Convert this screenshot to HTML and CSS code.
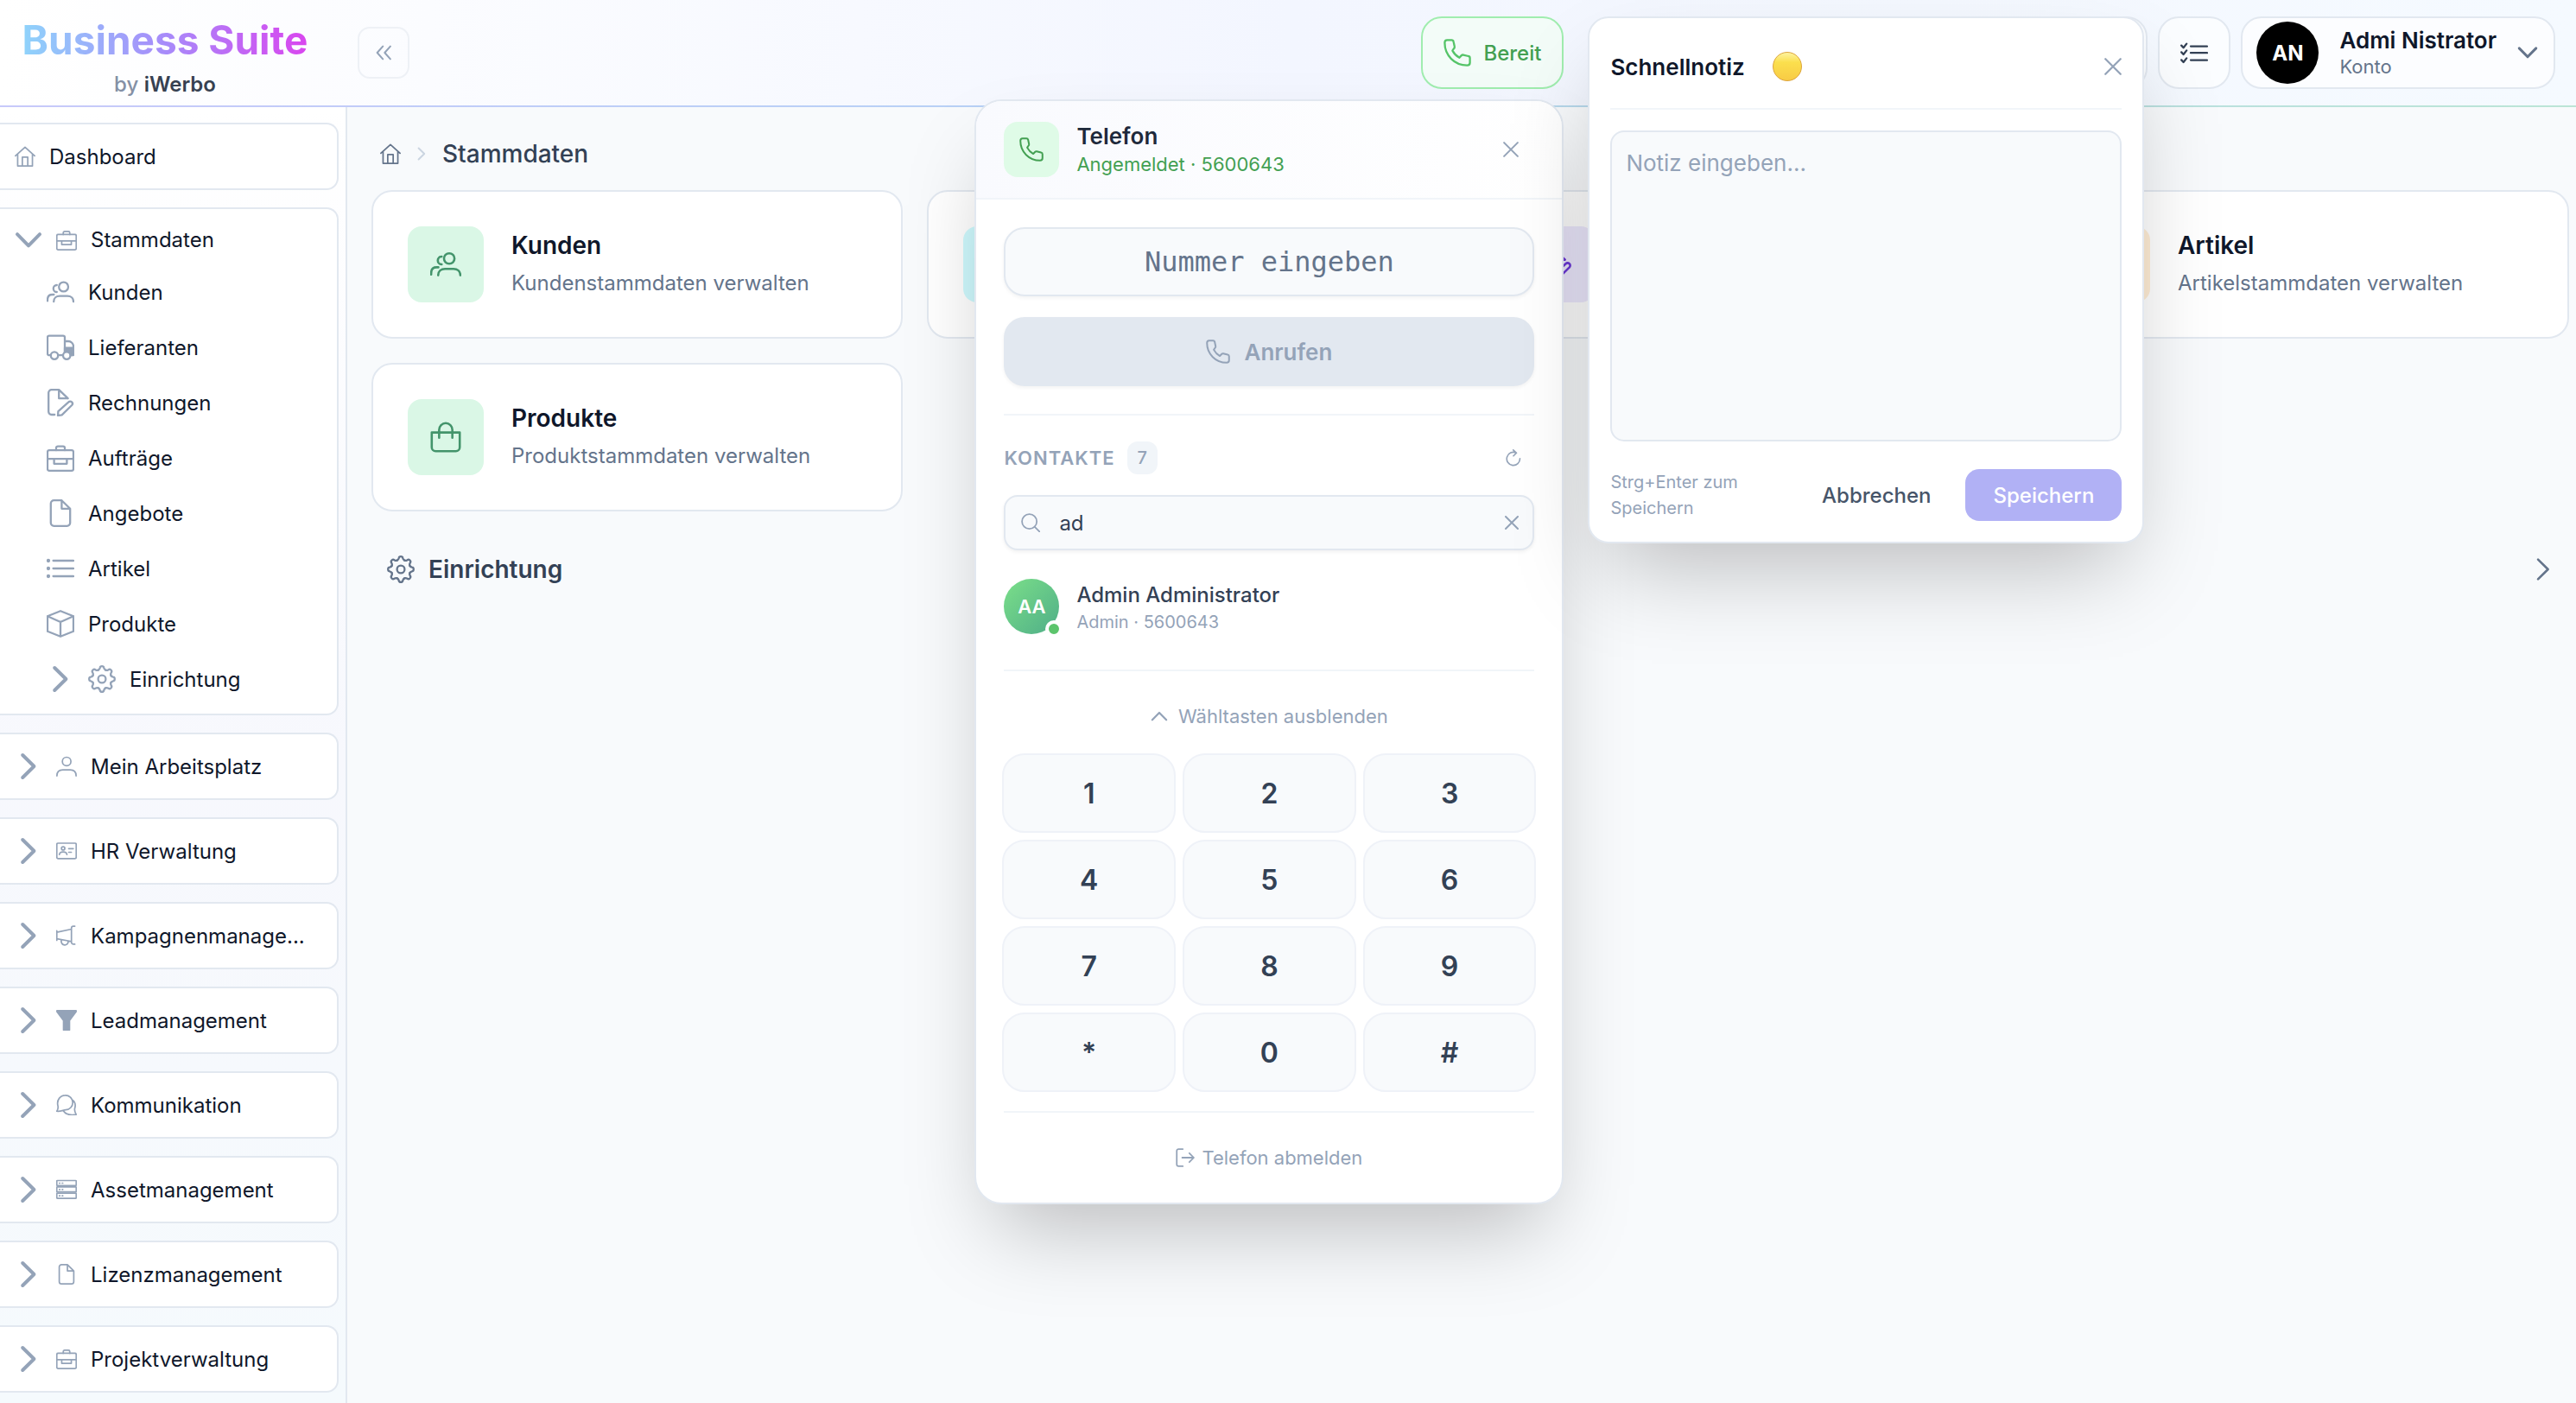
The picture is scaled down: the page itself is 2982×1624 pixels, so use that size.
FILE: index.html
```html
<!DOCTYPE html>
<html lang="de">
<head>
    <meta charset="UTF-8">
    <meta name="viewport" content="width=device-width, initial-scale=1.0">
    <title>Business Suite</title>
    <link rel="stylesheet" href="styles.css">
</head>
<body>
    <!-- Icons -->
    <svg class="sprite" aria-hidden="true">
        <symbol id="i-home" viewBox="0 0 16 16"><path d="M.6 7.6 8 .9l7.4 6.7M2.3 6.2v9.2h11.4V6.2M5.9 15.2V8.6h4.2v6.6"/></symbol>
        <symbol id="i-case" viewBox="0 0 16 16"><rect x=".5" y="3.6" width="15" height="11.8" rx="1"/><path d="M5.5 3.6V2.3a1 1 0 0 1 1-1h3a1 1 0 0 1 1 1v1.3M.5 8.6h15M4.3 8.6v2.8h7.4V8.6"/></symbol>
        <symbol id="i-people" viewBox="0 0 16 16"><circle cx="9.8" cy="5" r="2.7"/><path d="M4.1 13.6c0-2 1.5-3.3 3.5-3.3H12c2 0 3.5 1.3 3.5 3.3M5.9 4a2 2 0 0 0 0 4M.5 13.2v-.7c0-1.8 1-3 2.8-3h.9"/></symbol>
        <symbol id="i-truck" viewBox="0 0 16 16"><path d="M2.5 12.6h-1a1 1 0 0 1-1-1V2.3a1 1 0 0 1 1-1h8a1 1 0 0 1 1 1v10.3h-4M10.5 4.5h2a3 3 0 0 1 3 3v4.1a1 1 0 0 1-1 1h-1"/><path class="solid" d="M10.5 8.3h5v4.2h-1.8l-2-1.9-1.2 1.5z"/><circle cx="4.5" cy="12.8" r="2.1"/><circle cx="11.6" cy="12.8" r="2.1" fill="#fff"/></symbol>
        <symbol id="i-invoice" viewBox="0 0 16 16"><path d="M4.6 15H2.8a1.7 1.7 0 0 1-1.7-1.7v-11A1.7 1.7 0 0 1 2.8.6h4.3l5.2 5M7.1.6v5h5.2M6.5 15.5l.2-2.4 6-5.4a1.3 1.3 0 0 1 1.9 1.8l-5.8 5.7z"/></symbol>
        <symbol id="i-file" viewBox="0 0 16 16"><path d="M8.7.6H4.2a1.8 1.8 0 0 0-1.8 1.8v11.2a1.8 1.8 0 0 0 1.8 1.8h7.6a1.8 1.8 0 0 0 1.8-1.8V5.4zM8.7.6v4.8h4.9"/></symbol>
        <symbol id="i-list" viewBox="0 0 16 16"><path d="M3.8 3.5h11.7M3.8 8h11.7M3.8 12.5h11.7"/><g class="solid"><circle cx="1" cy="3.5" r=".5"/><circle cx="1" cy="8" r=".5"/><circle cx="1" cy="12.5" r=".5"/></g></symbol>
        <symbol id="i-box" viewBox="0 0 16 16"><path d="M8 .6l7.5 3v8.8L8 15.4l-7.5-3V3.6zM.5 3.6 8 7l7.5-3.4M8 7v8.4"/></symbol>
        <symbol id="i-gear" viewBox="0 0 16 16"><path id="tooth" d="M5.86 2.83C6.5 2.57 6.7 2.2 6.85 1.5 7 .3 9 .3 9.15 1.5c.15.7.35 1.07.99 1.33"/><use href="#tooth" transform="rotate(45 8 8)"/><use href="#tooth" transform="rotate(90 8 8)"/><use href="#tooth" transform="rotate(135 8 8)"/><use href="#tooth" transform="rotate(180 8 8)"/><use href="#tooth" transform="rotate(225 8 8)"/><use href="#tooth" transform="rotate(270 8 8)"/><use href="#tooth" transform="rotate(315 8 8)"/><circle cx="8" cy="8" r="2.2"/></symbol>
        <symbol id="i-user" viewBox="0 0 16 16"><circle cx="8.1" cy="4.3" r="3.3"/><path d="M.6 15.4c0-2.9 1.8-4.6 4.5-4.6h5.8c2.7 0 4.5 1.7 4.5 4.6"/></symbol>
        <symbol id="i-id" viewBox="0 0 16 16"><rect x=".5" y="2" width="15" height="11.9" rx="1"/><circle cx="5.4" cy="6" r="1.3"/><path d="M2.5 10.8c.2-2.8 5.6-2.8 5.8 0M9.7 6.2h3.5M9.7 9h2"/></symbol>
        <symbol id="i-horn" viewBox="0 0 16 16"><path d="M.5 4.2v7.4M.5 5.4 11.8 3M.5 10.4l11.3 2.1M14.4.7h-1.1a1.5 1.5 0 0 0-1.5 1.5v10.9a1.5 1.5 0 0 0 1.5 1.5h1.1M3.9 11.6c-.2 4.6 5.4 4.7 5.4.9"/></symbol>
        <symbol id="i-funnel" viewBox="0 0 16 16"><path class="solid" d="M.6.6h14.8v.8l-5.1 6.8v7.3H5.7V8.2L.6 1.4z"/></symbol>
        <symbol id="i-chat" viewBox="0 0 16 16"><path d="M.5 12.8c1.2-1.6 1.2-2.8.8-4.4C.3 4.2 3.2.6 7 .6a5.6 5.6 0 0 1 .4 11.2c-1.9.1-3.9 1.4-6.9 1zM12.7 4.3c1.9 1.4 2.4 3.8 1.7 6.2-.4 1.6.1 3.3 1.1 4.9-3.8.6-8 .2-9.8-2.7"/></symbol>
        <symbol id="i-server" viewBox="0 0 16 16"><rect x=".5" y="1" width="15" height="3.9" rx=".5"/><rect x=".5" y="5.9" width="15" height="3.9" rx=".5"/><rect x=".5" y="10.8" width="15" height="3.9" rx=".5"/><path d="M2.5 3h.4M4.7 3h.4M2.5 7.9h.4M4.7 7.9h.4M2.5 12.8h.4M4.7 12.8h.4"/></symbol>
        <symbol id="i-bag" viewBox="0 0 16 16"><path d="M.8 5.6h14.4v7.6a2 2 0 0 1-2 2H2.8a2 2 0 0 1-2-2zM4.6 8.3V4.2a3.4 3.4 0 0 1 6.8 0v4.1"/></symbol>
        <symbol id="i-phone" viewBox="0 0 16 16"><path d="M2.1.7h2.6c.6 0 1 .3 1.1.9l.6 2.8c.1.5 0 .9-.4 1.2l-.8 1.2c.9 1.7 2.2 3.1 4 4.1l1.1-1.2c.3-.3.8-.5 1.2-.4l2.9.7c.6.1.9.6.9 1.1v2.6c0 1-.7 1.600-1.600 1.600C6.400 15.300.7 9.600.7 2.300c0-.9.5-1.600 1.400-1.600z"/></symbol>
        <symbol id="i-x" viewBox="0 0 16 16"><path d="M1 1l14 14M15 1 1 15"/></symbol>
        <symbol id="i-search" viewBox="0 0 16 16"><circle cx="7" cy="7" r="6.2"/><path d="M11.5 11.5l4 4"/></symbol>
        <symbol id="i-refresh" viewBox="0 0 16 16"><path d="M14 8.6a6.1 6.1 0 1 1-3.5-5.3M7.8.7l3 2.7L8 6.2"/></symbol>
        <symbol id="i-logout" viewBox="0 0 16 16"><path d="M6 .8H2.4A1.5 1.5 0 0 0 .9 2.3v11.4a1.5 1.5 0 0 0 1.5 1.5H6M5.5 8h9.7M11.5 4.2 15.2 8l-3.7 3.8"/></symbol>
        <symbol id="i-right" viewBox="0 0 16 16"><path d="M4.6 1.5 11.2 8l-6.6 6.5"/></symbol>
        <symbol id="i-down" viewBox="0 0 16 16"><path d="M1.5 4.6 8 11.2l6.5-6.6"/></symbol>
        <symbol id="i-up" viewBox="0 0 16 16"><path d="M1.5 11.4 8 4.8l6.5 6.6"/></symbol>
        <symbol id="i-double" viewBox="0 0 16 16"><path d="M7.3 1.5 1.5 8l5.8 6.5M15 1.5 9.2 8l5.8 6.5"/></symbol>
        <symbol id="i-tasks" viewBox="0 0 16 16"><path d="M.6 3.8l1.2 1.3 1.8-2.3M.6 7.7l1.2 1.3 1.8-2.3M.6 12.2l1.2 1.3 1.8-2.3M6 4.3h9.5M6 8.1h9.5M6 12.3h9.5"/></symbol>
    </svg>

    <header class="topbar">
        <a class="brand" href="#">
            <span class="brand-name">Business Suite</span>
            <span class="brand-by">by <b>iWerbo</b></span>
        </a>
        <button class="collapse-btn" type="button"><svg class="icon icon-18"><use href="#i-double"/></svg></button>

        <div class="topbar-right">
            <div class="phone">
                <button class="phone-btn" type="button"><svg class="icon icon-32"><use href="#i-phone"/></svg>Bereit</button>

                <!-- Telefon -->
                <section class="phone-panel">
                    <div class="phone-head">
                        <span class="phone-badge"><svg class="icon icon-28"><use href="#i-phone"/></svg></span>
                        <div class="phone-title">
                            <h2>Telefon</h2>
                            <p>Angemeldet · 5600643</p>
                        </div>
                        <button class="close-btn" type="button"><svg class="icon icon-18"><use href="#i-x"/></svg></button>
                    </div>
                    <div class="phone-body">
                        <input class="number-input" type="tel" placeholder="Nummer eingeben">
                        <button class="call-btn" type="button" disabled><svg class="icon icon-28"><use href="#i-phone"/></svg>Anrufen</button>

                        <div class="contacts">
                            <div class="contacts-head">
                                <label for="contactSearch">KONTAKTE</label>
                                <span class="count">7</span>
                                <button class="refresh-btn" type="button"><svg class="icon icon-20"><use href="#i-refresh"/></svg></button>
                            </div>
                            <div class="search">
                                <svg class="icon icon-22"><use href="#i-search"/></svg>
                                <input id="contactSearch" type="text" value="ad">
                                <button type="button"><svg class="icon icon-16"><use href="#i-x"/></svg></button>
                            </div>
                            <a class="contact" href="#">
                                <span class="contact-avatar">AA<i class="online"></i></span>
                                <span class="contact-text">
                                    <span class="contact-name">Admin Administrator</span>
                                    <span class="contact-info">Admin · 5600643</span>
                                </span>
                            </a>
                        </div>

                        <div class="dialpad">
                            <button class="dialpad-toggle" type="button"><svg class="icon icon-20"><use href="#i-up"/></svg>Wähltasten ausblenden</button>
                            <div class="keys">
                                <button type="button">1</button>
                                <button type="button">2</button>
                                <button type="button">3</button>
                                <button type="button">4</button>
                                <button type="button">5</button>
                                <button type="button">6</button>
                                <button type="button">7</button>
                                <button type="button">8</button>
                                <button type="button">9</button>
                                <button type="button">*</button>
                                <button type="button">0</button>
                                <button type="button">#</button>
                            </div>
                        </div>
                        <div class="phone-foot">
                            <button type="button"><svg class="icon icon-22"><use href="#i-logout"/></svg>Telefon abmelden</button>
                        </div>
                    </div>
                </section>
            </div>

            <div class="notes">
                <button class="square-btn" type="button"><svg class="icon icon-32"><use href="#i-invoice"/></svg></button>

                <!-- Schnellnotiz -->
                <section class="note-panel">
                    <div class="note-head">
                        <label for="note">Schnellnotiz</label>
                        <i class="note-color"></i>
                        <button class="close-btn" type="button"><svg class="icon icon-20"><use href="#i-x"/></svg></button>
                    </div>
                    <textarea id="note" placeholder="Notiz eingeben..."></textarea>
                    <div class="note-foot">
                        <small>Strg+Enter zum Speichern</small>
                        <button class="cancel-btn" type="button">Abbrechen</button>
                        <button class="save-btn" type="button">Speichern</button>
                    </div>
                </section>
            </div>

            <button class="square-btn" type="button"><svg class="icon icon-32"><use href="#i-tasks"/></svg></button>
            <button class="account" type="button">
                <span class="account-avatar">AN</span>
                <span class="account-text">
                    <span class="account-name">Admi Nistrator</span>
                    <span class="account-sub">Konto</span>
                </span>
                <svg class="icon icon-24"><use href="#i-down"/></svg>
            </button>
        </div>
    </header>

    <div class="layout">
        <nav class="sidebar">
            <div class="nav-group">
                <a class="nav-head" href="#"><svg class="icon icon-24"><use href="#i-home"/></svg><span>Dashboard</span></a>
            </div>
            <div class="nav-group open">
                <a class="nav-head" href="#"><svg class="icon arrow"><use href="#i-down"/></svg><svg class="icon icon-24"><use href="#i-case"/></svg><span>Stammdaten</span></a>
                <ul class="nav-sub">
                    <li><a href="#"><svg class="icon icon-32"><use href="#i-people"/></svg>Kunden</a></li>
                    <li><a href="#"><svg class="icon icon-32"><use href="#i-truck"/></svg>Lieferanten</a></li>
                    <li><a href="#"><svg class="icon icon-32"><use href="#i-invoice"/></svg>Rechnungen</a></li>
                    <li><a href="#"><svg class="icon icon-32"><use href="#i-case"/></svg>Aufträge</a></li>
                    <li><a href="#"><svg class="icon icon-32"><use href="#i-file"/></svg>Angebote</a></li>
                    <li><a href="#"><svg class="icon icon-32"><use href="#i-list"/></svg>Artikel</a></li>
                    <li><a href="#"><svg class="icon icon-32"><use href="#i-box"/></svg>Produkte</a></li>
                    <li><a href="#"><svg class="icon arrow"><use href="#i-right"/></svg><svg class="icon icon-32"><use href="#i-gear"/></svg>Einrichtung</a></li>
                </ul>
            </div>
            <div class="nav-group">
                <a class="nav-head" href="#"><svg class="icon arrow"><use href="#i-right"/></svg><svg class="icon icon-24"><use href="#i-user"/></svg><span>Mein Arbeitsplatz</span></a>
            </div>
            <div class="nav-group">
                <a class="nav-head" href="#"><svg class="icon arrow"><use href="#i-right"/></svg><svg class="icon icon-24"><use href="#i-id"/></svg><span>HR Verwaltung</span></a>
            </div>
            <div class="nav-group">
                <a class="nav-head" href="#"><svg class="icon arrow"><use href="#i-right"/></svg><svg class="icon icon-24"><use href="#i-horn"/></svg><span>Kampagnenmanage...</span></a>
            </div>
            <div class="nav-group">
                <a class="nav-head" href="#"><svg class="icon arrow"><use href="#i-right"/></svg><svg class="icon icon-24"><use href="#i-funnel"/></svg><span>Leadmanagement</span></a>
            </div>
            <div class="nav-group">
                <a class="nav-head" href="#"><svg class="icon arrow"><use href="#i-right"/></svg><svg class="icon icon-24"><use href="#i-chat"/></svg><span>Kommunikation</span></a>
            </div>
            <div class="nav-group">
                <a class="nav-head" href="#"><svg class="icon arrow"><use href="#i-right"/></svg><svg class="icon icon-24"><use href="#i-server"/></svg><span>Assetmanagement</span></a>
            </div>
            <div class="nav-group">
                <a class="nav-head" href="#"><svg class="icon arrow"><use href="#i-right"/></svg><svg class="icon icon-24"><use href="#i-file"/></svg><span>Lizenzmanagement</span></a>
            </div>
            <div class="nav-group">
                <a class="nav-head" href="#"><svg class="icon arrow"><use href="#i-right"/></svg><svg class="icon icon-24"><use href="#i-case"/></svg><span>Projektverwaltung</span></a>
            </div>
        </nav>

        <main class="content">
            <div class="breadcrumb">
                <a href="#"><svg class="icon icon-24"><use href="#i-home"/></svg></a>
                <svg class="icon icon-16 sep"><use href="#i-right"/></svg>
                <span>Stammdaten</span>
            </div>

            <div class="cards">
                <a class="card" href="#">
                    <span class="card-icon green"><svg class="icon icon-36"><use href="#i-people"/></svg></span>
                    <span class="card-text">
                        <span class="card-title">Kunden</span>
                        <span class="card-sub">Kundenstammdaten verwalten</span>
                    </span>
                </a>
                <a class="card" href="#">
                    <span class="card-icon cyan"><svg class="icon icon-36"><use href="#i-truck"/></svg></span>
                </a>
                <a class="card" href="#">
                    <span class="card-icon violet"><svg class="icon icon-36"><use href="#i-invoice"/></svg></span>
                </a>
                <a class="card" href="#">
                    <span class="card-icon orange"><svg class="icon icon-36"><use href="#i-list"/></svg></span>
                    <span class="card-text">
                        <span class="card-title">Artikel</span>
                        <span class="card-sub">Artikelstammdaten verwalten</span>
                    </span>
                </a>
                <a class="card" href="#">
                    <span class="card-icon green"><svg class="icon icon-36"><use href="#i-bag"/></svg></span>
                    <span class="card-text">
                        <span class="card-title">Produkte</span>
                        <span class="card-sub">Produktstammdaten verwalten</span>
                    </span>
                </a>
            </div>

            <button class="section-toggle" type="button">
                <svg class="icon icon-32"><use href="#i-gear"/></svg>
                <span>Einrichtung</span>
                <svg class="icon icon-28"><use href="#i-right"/></svg>
            </button>
        </main>
    </div>
</body>
</html>
```
FILE: styles.css
```css
* {
    box-sizing: border-box;
}

body {
    margin: 0;
    min-height: 100vh;
    display: flex;
    flex-direction: column;
    font-family: Inter, sans-serif;
    font-size: 24px;
    color: #0f172a;
    background-color: #f8fafc;
    overflow-x: hidden;
}

a {
    color: inherit;
    text-decoration: none;
}

h2, p, ul {
    margin: 0;
    padding: 0;
}

button, input, textarea {
    font-family: inherit;
    font-size: inherit;
    color: inherit;
    outline: none;
}

button {
    padding: 0;
    border: none;
    background: none;
    cursor: pointer;
}

/* Icons */
.sprite {
    position: absolute;
    width: 0;
    height: 0;
}

.icon {
    flex: none;
    display: block;
    fill: none;
    stroke: currentColor;
    stroke-width: 1.15;
    stroke-linecap: round;
    stroke-linejoin: round;
    overflow: visible;
}

.solid {
    fill: currentColor;
}

.icon-16 { width: 16px; height: 16px; stroke-width: 2; }
.icon-18 { width: 18px; height: 18px; stroke-width: 1.8; }
.icon-20 { width: 20px; height: 20px; stroke-width: 1.8; }
.icon-22 { width: 22px; height: 22px; stroke-width: 1.3; }
.icon-24 { width: 24px; height: 24px; }
.icon-28 { width: 28px; height: 28px; }
.icon-32 { width: 32px; height: 32px; }
.icon-36 { width: 36px; height: 36px; }

/* Header */
.topbar {
    position: relative;
    z-index: 10;
    flex: none;
    display: flex;
    align-items: center;
    height: 124px;
    padding-right: 24px;
    border-bottom: 2px solid;
    border-image: linear-gradient(90deg, #c7c9fa, #b5d2f5 45%, #b9dfe0 80%, #bbe5d6) 1;
    background: linear-gradient(90deg, #ffffff, #f3f6ff 50%, #f5faff);
}

.brand {
    width: 382px;
    padding-top: 14px;
    display: flex;
    flex-direction: column;
    align-items: center;
}

.brand-name {
    font-size: 46px;
    line-height: 56px;
    font-weight: 700;
    background: linear-gradient(90deg, #8fd3fb, #a78bfa 50%, #d946ef);
    -webkit-background-clip: text;
    background-clip: text;
    color: transparent;
}

.brand-by {
    margin-top: 4px;
    line-height: 40px;
    color: #8490a5;
    font-weight: 500;
}

.brand-by b {
    color: #374151;
    font-weight: 600;
}

.collapse-btn {
    width: 60px;
    height: 60px;
    margin-left: 32px;
    display: flex;
    align-items: center;
    justify-content: center;
    border: 2px solid #eef1f6;
    border-radius: 14px;
    color: #94a3b8;
}

.topbar-right {
    margin-left: auto;
    display: flex;
    gap: 12px;
}

.phone, .notes {
    position: relative;
}

.notes {
    z-index: 2;
    width: 664px;
    display: flex;
    justify-content: flex-end;
}

.phone-btn {
    height: 84px;
    padding: 0 24px;
    display: flex;
    align-items: center;
    gap: 14px;
    border: 2px solid #a0edaf;
    border-radius: 24px;
    background-color: #f3fcf8;
    color: #43a052;
    font-weight: 500;
}

.phone-btn .icon {
    color: #55c468;
}

.square-btn {
    width: 84px;
    height: 84px;
    display: flex;
    align-items: center;
    justify-content: center;
    border: 2px solid #e2e8f0;
    border-radius: 24px;
    background-color: #fbfdff;
    color: #334155;
}

.account {
    height: 84px;
    padding: 0 18px 0 16px;
    display: flex;
    align-items: center;
    gap: 24px;
    border: 2px solid #e2e8f0;
    border-radius: 24px;
    background-color: #fcfdff;
    text-align: left;
}

.account-avatar {
    width: 72px;
    height: 72px;
    display: flex;
    align-items: center;
    justify-content: center;
    border-radius: 50%;
    background-color: #000;
    color: #fff;
    font-weight: 700;
}

.account-text {
    display: flex;
    flex-direction: column;
}

.account-name {
    font-size: 26px;
    line-height: 32px;
    font-weight: 600;
}

.account-sub {
    font-size: 22px;
    line-height: 28px;
    color: #64748b;
}

.account .icon {
    color: #64748b;
    stroke-width: 2;
}

/* Telefon */
.phone-panel {
    position: absolute;
    top: 96px;
    right: 0;
    width: 682px;
    border: 2px solid #e2e8f0;
    border-radius: 32px;
    background-color: #fff;
    box-shadow: 0 50px 100px -24px rgba(0,0,0,0.25);
}

.phone-head {
    display: flex;
    align-items: center;
    height: 114px;
    padding: 0 32px;
    gap: 20px;
    border-bottom: 2px solid #f1f5f9;
    border-radius: 30px 30px 0 0;
    background: linear-gradient(90deg, #f9fafe, #ffffff);
}

.phone-badge {
    width: 64px;
    height: 64px;
    display: flex;
    align-items: center;
    justify-content: center;
    border-radius: 16px;
    background-color: #dffbe7;
    color: #43a052;
}

.phone-title h2 {
    font-size: 26px;
    line-height: 34px;
    font-weight: 600;
    color: #1e293b;
}

.phone-title p {
    font-size: 22px;
    line-height: 30px;
    color: #43a052;
}

.close-btn {
    margin-left: auto;
    color: #94a3b8;
}

.phone-head .close-btn {
    padding: 18px;
}

.phone-body {
    padding: 32px 32px 30px;
    display: flex;
    flex-direction: column;
}

.number-input {
    width: 100%;
    height: 80px;
    border: 2px solid #e2e8f0;
    border-radius: 24px;
    background-color: #f8fafc;
    box-shadow: 0 2px 4px rgba(0,0,0,0.05);
    font-family: "DejaVu Sans Mono", monospace;
    font-size: 32px;
    text-align: center;
}

.number-input::placeholder {
    color: #64748b;
}

.call-btn {
    height: 80px;
    margin-top: 24px;
    display: flex;
    align-items: center;
    justify-content: center;
    gap: 16px;
    border-radius: 24px;
    background-color: #e2e8f0;
    box-shadow: 0 2px 4px rgba(0,0,0,0.05);
    color: #94a3b8;
    font-size: 26px;
    font-weight: 600;
}

.contacts, .dialpad {
    margin-top: 32px;
    border-top: 2px solid #f1f5f9;
}

.contacts-head {
    display: flex;
    align-items: center;
    gap: 14px;
    padding-top: 30px;
    font-size: 22px;
    font-weight: 600;
    color: #94a3b8;
}

.contacts-head label {
    letter-spacing: 1px;
}

.count {
    height: 38px;
    padding: 0 12px;
    border-radius: 12px;
    background-color: #f1f5f9;
    font-size: 20px;
    line-height: 38px;
    font-weight: 500;
}

.refresh-btn {
    margin-left: auto;
    padding: 0 14px;
}

.refresh-btn .icon {
    stroke-width: 1.3;
}

.search {
    display: flex;
    align-items: center;
    height: 64px;
    margin-top: 24px;
    padding: 0 16px 0 18px;
    border: 2px solid #e2e8f0;
    border-radius: 16px;
    background-color: #f8fafc;
    box-shadow: 0 2px 4px rgba(0,0,0,0.06);
    color: #94a3b8;
}

.search input {
    flex: 1;
    min-width: 0;
    padding: 0 22px;
    border: none;
    background: none;
    color: #334155;
}

.contact {
    display: flex;
    align-items: center;
    gap: 20px;
    margin-top: 32px;
    padding-bottom: 8px;
}

.contact-avatar {
    position: relative;
    width: 64px;
    height: 64px;
    display: flex;
    align-items: center;
    justify-content: center;
    border-radius: 50%;
    background: linear-gradient(135deg, #7bdf89, #4fae88);
    color: #fff;
    font-size: 22px;
    font-weight: 600;
}

.online {
    position: absolute;
    right: -4px;
    bottom: -4px;
    width: 20px;
    height: 20px;
    border: 4px solid #fff;
    border-radius: 50%;
    background-color: #5cc46c;
}

.contact-text {
    display: flex;
    flex-direction: column;
    padding-top: 4px;
}

.contact-name {
    line-height: 32px;
    font-weight: 500;
    color: #334155;
}

.contact-info {
    font-size: 20px;
    line-height: 30px;
    color: #94a3b8;
}

.dialpad-toggle {
    width: 100%;
    height: 44px;
    margin: 30px 0 21px;
    display: flex;
    align-items: center;
    justify-content: center;
    gap: 12px;
    font-size: 22px;
    color: #94a3b8;
}

.keys {
    display: grid;
    grid-template-columns: repeat(3, 1fr);
    gap: 8px;
    margin: 0 -2px;
}

.keys button {
    height: 92px;
    border: 2px solid #eff2f8;
    border-radius: 26px;
    background-color: #f8fafc;
    color: #334155;
    font-size: 32px;
    font-weight: 600;
}

.phone-foot {
    margin-top: 22px;
    border-top: 2px solid #f1f5f9;
}

.phone-foot button {
    width: 100%;
    height: 44px;
    margin-top: 30px;
    display: flex;
    align-items: center;
    justify-content: center;
    gap: 8px;
    font-size: 22px;
    color: #94a3b8;
}

/* Schnellnotiz */
.note-panel {
    position: absolute;
    top: 0;
    right: 4px;
    width: 644px;
    padding: 24px;
    border: 2px solid #e2e8f0;
    border-radius: 24px;
    background-color: #fff;
    box-shadow: 0 50px 100px -24px rgba(0,0,0,0.25);
}

.note-head {
    display: flex;
    align-items: center;
    height: 82px;
    padding-bottom: 16px;
    border-bottom: 2px solid #f1f5f9;
    font-size: 26px;
    font-weight: 600;
}

.note-color {
    width: 34px;
    height: 34px;
    margin-left: 32px;
    border: 1px solid #dda43c;
    border-radius: 50%;
    background: linear-gradient(#fdf3a0, #fbdf4d 35%, #f8cb45);
}

.note-panel textarea {
    display: block;
    width: 100%;
    height: 360px;
    margin-top: 24px;
    padding: 18px 16px;
    border: 2px solid #e2e8f0;
    border-radius: 16px;
    background-color: #f8fafc;
    font-size: 26px;
    line-height: 36px;
    resize: none;
}

.note-panel textarea::placeholder {
    color: #94a3b8;
}

.note-foot {
    display: flex;
    align-items: center;
    margin-top: 32px;
}

.note-foot small {
    flex: 1;
    padding-right: 60px;
    font-size: 20px;
    line-height: 30px;
    color: #94a3b8;
}

.cancel-btn, .save-btn {
    height: 60px;
    font-weight: 500;
}

.cancel-btn {
    margin-right: 40px;
    color: #475569;
}

.save-btn {
    padding: 0 32px;
    border-radius: 16px;
    background-color: #b1b1f5;
    color: #fff;
}

/* Layout */
.layout {
    flex: 1;
    display: flex;
}

.sidebar {
    flex: none;
    width: 402px;
    padding: 18px 8px 12px 0;
    display: flex;
    flex-direction: column;
    gap: 20px;
    border-right: 2px solid #e2e8f0;
    background: linear-gradient(#ffffff, #f7f8fd 50%, #f5fafd);
}

.nav-group {
    border: 2px solid #e2e8f0;
    border-left: none;
    border-radius: 0 14px 14px 0;
    background-color: #fff;
}

.nav-head {
    display: flex;
    align-items: center;
    gap: 16px;
    height: 74px;
    padding: 0 24px 0 17px;
}

.nav-head span {
    overflow: hidden;
    text-overflow: ellipsis;
    white-space: nowrap;
}

.nav-group.open .nav-head {
    height: 64px;
    padding-top: 7px;
}

.sidebar .icon {
    color: #94a3b8;
}

.sidebar .arrow {
    width: 32px;
    height: 32px;
    stroke-width: 2;
}

.nav-sub {
    list-style: none;
    padding-bottom: 8px;
}

.nav-sub a {
    display: flex;
    align-items: center;
    gap: 16px;
    height: 64px;
    padding-left: 54px;
}

.content {
    flex: 1;
    padding: 26px 8px 0 28px;
}

.breadcrumb {
    display: flex;
    align-items: center;
    gap: 16px;
    height: 56px;
    margin-bottom: 14px;
    padding-left: 10px;
    font-size: 28px;
    font-weight: 500;
    color: #334155;
}

.breadcrumb a {
    color: #64748b;
}

.breadcrumb .sep {
    color: #cbd5e1;
}

.cards {
    display: grid;
    grid-template-columns: repeat(4, 1fr);
    gap: 28px;
}

.card {
    display: flex;
    align-items: center;
    gap: 32px;
    height: 172px;
    padding: 0 40px;
    border: 2px solid #e2e8f0;
    border-radius: 24px;
    background-color: #fff;
}

.card-icon {
    flex: none;
    width: 88px;
    height: 88px;
    display: flex;
    align-items: center;
    justify-content: center;
    border-radius: 16px;
}

.green { background-color: #daf7e6; color: #43946b; }
.cyan { background-color: #cffafe; color: #0891b2; }
.violet { background-color: #ede9fe; color: #6d3ad9; }
.orange { background-color: #ffedd5; color: #ea580c; }

.card-text {
    display: flex;
    flex-direction: column;
    gap: 6px;
}

.card-title {
    font-size: 28px;
    line-height: 38px;
    font-weight: 600;
}

.card-sub {
    line-height: 38px;
    color: #64748b;
}

.section-toggle {
    width: 100%;
    height: 72px;
    margin-top: 31px;
    padding: 0 16px 0 18px;
    display: flex;
    align-items: center;
    gap: 16px;
    font-size: 28px;
    font-weight: 600;
    color: #334155;
}

.section-toggle .icon {
    color: #64748b;
}

.section-toggle .icon:last-child {
    margin-left: auto;
    stroke-width: 1.5;
}
```
